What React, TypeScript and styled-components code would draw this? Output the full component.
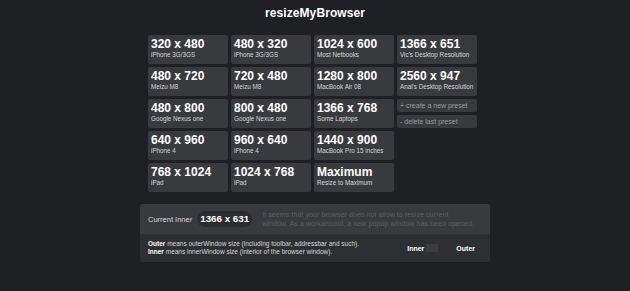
import React from "react";
import styled, { createGlobalStyle } from "styled-components";

const GlobalStyle = createGlobalStyle`
  html, body {
    margin: 0;
    padding: 0;
    background: #1f2024;
  }
  body {
    font-family: "Liberation Sans", Arial, sans-serif;
    color: #ffffff;
  }
`;

//Page wrapper
const Page = styled.div`
  width: 350px;
  margin: 0 auto;
  padding-top: 6px;
  display: flex;
  flex-flow: column nowrap;
`;

const Title = styled.h1`
  margin: 0;
  height: 29px;
  font-size: 12px;
  line-height: 14px;
  font-weight: 700;
  text-align: center;
  letter-spacing: 0.1px;
`;

//Preset grid
const PresetGrid = styled.div`
  display: grid;
  grid-template-columns: repeat(4, 80px);
  grid-auto-rows: 29px;
  gap: 3px;
  padding: 0 14px 0 8px;
`;

const Preset = styled.div`
  background-color: #393a3e;
  border-radius: 2px;
  padding: 3px 0 0 3px;
  display: flex;
  flex-flow: column nowrap;
  cursor: pointer;
`;

const PresetSize = styled.div`
  font-size: 12px;
  line-height: 13px;
  font-weight: 700;
  color: #ffffff;
  white-space: nowrap;
`;

const PresetName = styled.div`
  font-size: 6.3px;
  line-height: 8px;
  color: #d8d8d8;
  white-space: nowrap;
`;

const PresetActions = styled.div`
  display: flex;
  flex-flow: column nowrap;
  gap: 3px;
`;

const ActionButton = styled.div`
  height: 14px;
  background-color: #393a3e;
  border-radius: 2px;
  padding-left: 3px;
  font-size: 7px;
  line-height: 13px;
  color: #9a9b9e;
  white-space: nowrap;
`;

//Bottom info panel
const InfoPanel = styled.div`
  margin-top: 12px;
  border-radius: 2px;
  overflow: hidden;
`;

const CurrentRow = styled.div`
  height: 30px;
  background-color: #393a3e;
  display: flex;
  flex-flow: row nowrap;
  align-items: center;
  padding-left: 8px;
`;

const CurrentLabel = styled.span`
  font-size: 7.5px;
  color: #d8d8d8;
`;

const CurrentValue = styled.span`
  margin-left: 5px;
  height: 16px;
  padding: 0 3px;
  border-radius: 8px;
  background-color: #2b2c30;
  font-size: 9.8px;
  line-height: 16px;
  font-weight: 700;
  color: #ffffff;
`;

const Notice = styled.p`
  margin: 0 0 0 10px;
  font-size: 7.2px;
  line-height: 9.5px;
  color: #5d5e62;
  white-space: nowrap;
`;

const LegendRow = styled.div`
  height: 28px;
  background-color: #2e2f33;
  display: flex;
  flex-flow: row nowrap;
  align-items: center;
  padding-left: 8px;
`;

const Legend = styled.p`
  margin: 0;
  font-size: 6.5px;
  line-height: 8.5px;
  color: #d8d8d8;
  flex: 1;

  b {
    color: #ffffff;
  }
`;

const Toggle = styled.div`
  display: flex;
  flex-flow: row nowrap;
  align-items: center;
  margin-right: 15px;
`;

const ToggleLabel = styled.span`
  font-size: 7px;
  font-weight: 700;
  color: #ffffff;
`;

const ToggleBox = styled.span`
  width: 12px;
  height: 8px;
  margin: 0 18px 0 2px;
  background-color: #3a3b3f;
`;

const presets = [
  ["320 x 480", "iPhone 3G/3GS"],
  ["480 x 320", "iPhone 3G/3GS"],
  ["1024 x 600", "Most Netbooks"],
  ["1366 x 651", "Vic's Desktop Resolution"],
  ["480 x 720", "Meizu M8"],
  ["720 x 480", "Meizu M8"],
  ["1280 x 800", "MacBook Air 08"],
  ["2560 x 947", "Anal's Desktop Resolution"],
  ["480 x 800", "Google Nexus one"],
  ["800 x 480", "Google Nexus one"],
  ["1366 x 768", "Some Laptops"],
  null,
  ["640 x 960", "iPhone 4"],
  ["960 x 640", "iPhone 4"],
  ["1440 x 900", "MacBook Pro 15 inches"],
  "empty",
  ["768 x 1024", "iPad"],
  ["1024 x 768", "iPad"],
  ["Maximum", "Resize to Maximum"],
];

const App = () => {
  return (
    <>
      <GlobalStyle />
      <Page>
        <Title>resizeMyBrowser</Title>
        <PresetGrid>
          {presets.map((preset, i) => {
            if (preset === null) {
              return (
                <PresetActions key={i}>
                  <ActionButton>+ create a new preset</ActionButton>
                  <ActionButton>- delete last preset</ActionButton>
                </PresetActions>
              );
            }
            if (preset === "empty") return <div key={i} />;
            return (
              <Preset key={i}>
                <PresetSize>{preset[0]}</PresetSize>
                <PresetName>{preset[1]}</PresetName>
              </Preset>
            );
          })}
        </PresetGrid>
        <InfoPanel>
          <CurrentRow>
            <CurrentLabel>Current Inner</CurrentLabel>
            <CurrentValue>1366 x 631</CurrentValue>
            <Notice>
              It seems that your browser does not allow to resize current
              <br />
              window. As a workaround, a new popup window has been opened.
            </Notice>
          </CurrentRow>
          <LegendRow>
            <Legend>
              <b>Outer</b> means outerWindow size (including toolbar, addressbar
              and such).
              <br />
              <b>Inner</b> means innerWindow size (interior of the browser
              window).
            </Legend>
            <Toggle>
              <ToggleLabel>Inner</ToggleLabel>
              <ToggleBox />
              <ToggleLabel>Outer</ToggleLabel>
            </Toggle>
          </LegendRow>
        </InfoPanel>
      </Page>
    </>
  );
};

export default App;
